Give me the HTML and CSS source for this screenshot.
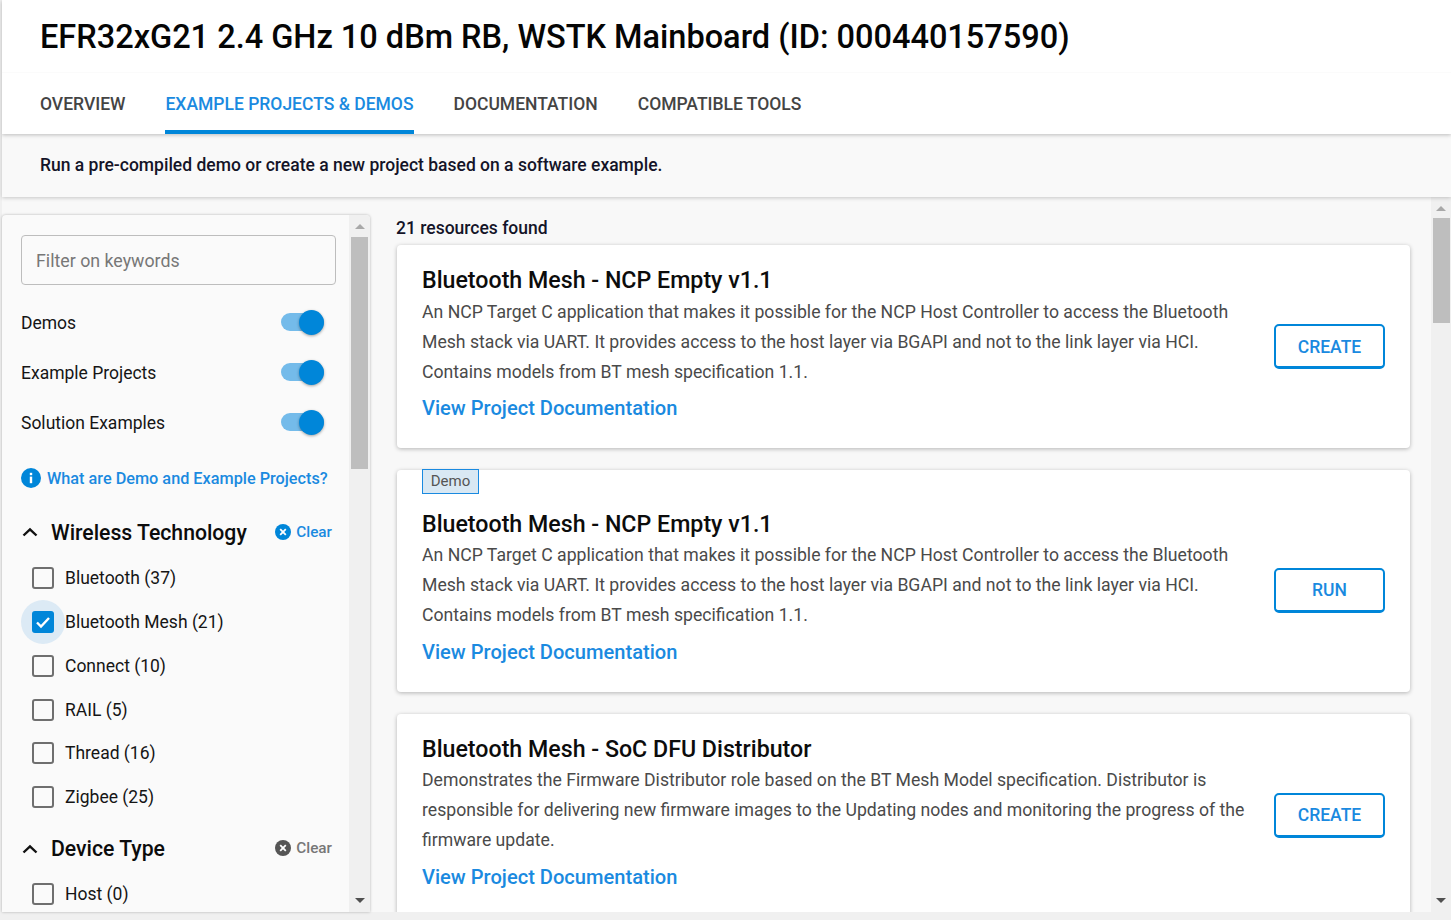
FILE: index.html
```html
<!DOCTYPE html>
<html lang="en">
<head>
<meta charset="utf-8">
<title>EFR32xG21 Example Projects</title>
<link rel="stylesheet" href="styles.css">
</head>
<body>
<div class="page">
  <header class="top">
    <h1 class="title">EFR32xG21 2.4 GHz 10 dBm RB, WSTK Mainboard (ID: 000440157590)</h1>
    <nav class="tabs">
      <a class="tab">OVERVIEW</a>
      <a class="tab active">EXAMPLE PROJECTS &amp; DEMOS</a>
      <a class="tab">DOCUMENTATION</a>
      <a class="tab">COMPATIBLE TOOLS</a>
    </nav>
  </header>
  <div class="intro">Run a pre-compiled demo or create a new project based on a software example.</div>
  <div class="main">
    <aside class="sidebar">
      <div class="side-body">
        <div class="search">Filter on keywords</div>
        <div class="toggle-row"><span class="toggle-label">Demos</span><span class="switch"><span class="knob"></span></span></div>
        <div class="toggle-row"><span class="toggle-label">Example Projects</span><span class="switch"><span class="knob"></span></span></div>
        <div class="toggle-row"><span class="toggle-label">Solution Examples</span><span class="switch"><span class="knob"></span></span></div>
        <a class="help">
          <svg class="help-icon" viewBox="0 0 20 20"><circle cx="10" cy="10" r="10" fill="#0086d9"/><rect x="8.8" y="8.6" width="2.4" height="6.6" fill="#fff"/><rect x="8.8" y="4.8" width="2.4" height="2.4" fill="#fff"/></svg>
          What are Demo and Example Projects?
        </a>
        <div class="group-head first">
          <svg class="chev" viewBox="0 0 16 10"><path d="M1.5 8.5 8 2.3l6.5 6.2" fill="none" stroke="#111" stroke-width="2.4"/></svg>
          <span class="group-title">Wireless Technology</span>
          <span class="clear on"><svg class="clear-icon" viewBox="0 0 16 16"><circle cx="8" cy="8" r="8" fill="#0086d9"/><path d="M5.2 5.2l5.6 5.6M10.8 5.2l-5.6 5.6" stroke="#fff" stroke-width="1.8"/></svg>Clear</span>
        </div>
        <label class="check"><span class="box"></span>Bluetooth (37)</label>
        <label class="check"><span class="box checked"><svg viewBox="0 0 22 22"><path d="M5 11.5l4 4 8-8.5" fill="none" stroke="#fff" stroke-width="2.4"/></svg></span>Bluetooth Mesh (21)</label>
        <label class="check"><span class="box"></span>Connect (10)</label>
        <label class="check"><span class="box"></span>RAIL (5)</label>
        <label class="check"><span class="box"></span>Thread (16)</label>
        <label class="check"><span class="box"></span>Zigbee (25)</label>
        <div class="group-head second">
          <svg class="chev" viewBox="0 0 16 10"><path d="M1.5 8.5 8 2.3l6.5 6.2" fill="none" stroke="#111" stroke-width="2.4"/></svg>
          <span class="group-title">Device Type</span>
          <span class="clear"><svg class="clear-icon" viewBox="0 0 16 16"><circle cx="8" cy="8" r="8" fill="#555"/><path d="M5.2 5.2l5.6 5.6M10.8 5.2l-5.6 5.6" stroke="#fff" stroke-width="1.8"/></svg>Clear</span>
        </div>
        <label class="check host"><span class="box"></span>Host (0)</label>
      </div>
      <div class="scrollbar side-scroll">
        <span class="arrow up"></span>
        <span class="thumb"></span>
        <span class="arrow down"></span>
      </div>
    </aside>
    <section class="results">
      <div class="count">21 resources found</div>
      <article class="card">
        <div class="card-text">
          <h2 class="card-title">Bluetooth Mesh - NCP Empty v1.1</h2>
          <p class="card-desc">An NCP Target C application that makes it possible for the NCP Host Controller to access the Bluetooth Mesh stack via UART. It provides access to the host layer via BGAPI and not to the link layer via HCI. Contains models from BT mesh specification 1.1.</p>
          <a class="doc">View Project Documentation</a>
        </div>
        <button class="action">CREATE</button>
      </article>
      <article class="card demo">
        <span class="tag">Demo</span>
        <div class="card-text">
          <h2 class="card-title">Bluetooth Mesh - NCP Empty v1.1</h2>
          <p class="card-desc">An NCP Target C application that makes it possible for the NCP Host Controller to access the Bluetooth Mesh stack via UART. It provides access to the host layer via BGAPI and not to the link layer via HCI. Contains models from BT mesh specification 1.1.</p>
          <a class="doc">View Project Documentation</a>
        </div>
        <button class="action">RUN</button>
      </article>
      <article class="card">
        <div class="card-text">
          <h2 class="card-title">Bluetooth Mesh - SoC DFU Distributor</h2>
          <p class="card-desc">Demonstrates the Firmware Distributor role based on the BT Mesh Model specification. Distributor is responsible for delivering new firmware images to the Updating nodes and monitoring the progress of the firmware update.</p>
          <a class="doc">View Project Documentation</a>
        </div>
        <button class="action">CREATE</button>
      </article>
    </section>
    <div class="scrollbar main-scroll">
      <span class="arrow up"></span>
      <span class="thumb"></span>
      <span class="arrow down dark"></span>
    </div>
  </div>
</div>
</body>
</html>
```

FILE: styles.css
```css
* { box-sizing: border-box; }
html, body { margin: 0; height: 100%; overflow: hidden; }
body { background: #f0f0f0; font-family: Roboto, "Liberation Sans", sans-serif; color: #111; }
.page { margin-left: 2px; height: 912px; display: flex; flex-direction: column; background: #f8f8f8; }

.top { background: #fff; box-shadow: 0 1px 4px rgba(0,0,0,.25); position: relative; z-index: 3; flex: none; }
.title { margin: 0; height: 73px; padding-left: 38px; font-size: 32.5px; line-height: 74px; font-weight: 500; color: #050505; border-bottom: 1px solid #fbfbfb; white-space: nowrap; }
.tabs { display: flex; gap: 40px; padding-left: 38px; height: 61px; }
.tab { font-size: 17.5px; font-weight: 500; line-height: 62px; color: #444; border-bottom: 3px solid transparent; height: 61px; }
.tab.active { color: #1a8ae0; border-bottom: 4px solid #0086d9; }

.intro { flex: none; height: 63px; padding-left: 38px; background: #f9f9f9; font-size: 17.5px; font-weight: 500; line-height: 62px; color: #141428; box-shadow: 0 1px 4px rgba(0,0,0,.2); position: relative; z-index: 2; }

.main { flex: 1; min-height: 0; display: flex; }

.sidebar { flex: none; width: 368px; margin-top: 18px; display: flex; background: #fafafa; border-radius: 4px 4px 0 0; box-shadow: 0 0 3px rgba(0,0,0,.28); overflow: hidden; }
.side-body { flex: none; width: 347px; padding: 20px 0 0 19px; overflow: hidden; isolation: isolate; }
.search { width: 315px; height: 50px; margin-bottom: 12px; border: 1px solid #bdbdbd; border-radius: 4px; padding-left: 14px; font-size: 17.8px; line-height: 49px; color: #777; }
.toggle-row { display: flex; justify-content: space-between; align-items: center; height: 50px; font-size: 17.5px; width: 303px; color: #151515; }
.toggle-label { padding-top: 2px; }
.switch { position: relative; width: 43px; height: 18px; border-radius: 9px; background: #74bbea; }
.knob { position: absolute; right: 0; top: -3.5px; width: 25px; height: 25px; border-radius: 50%; background: #0086d9; box-shadow: 0 1px 3px rgba(0,0,0,.35); }
.help { display: flex; align-items: center; gap: 6px; margin-top: 19px; height: 24px; font-size: 16.25px; font-weight: 500; color: #1a8ae0; white-space: nowrap; }
.help-icon { width: 20px; height: 20px; flex: none; }
.group-head { display: flex; align-items: center; height: 32px; width: 311px; }
.group-head.first { margin-top: 26px; }
.group-head.second { margin-top: 13.7px; }
.second .clear { margin-top: -2px; }
.chev { width: 16px; height: 10px; flex: none; margin-left: 1px; }
.group-title { margin-left: 13px; font-size: 21.2px; font-weight: 500; color: #0c0c0c; flex: 1; white-space: nowrap; }
.clear { display: flex; align-items: center; gap: 5px; font-size: 15.3px; font-weight: 500; color: #777; }
.clear.on { color: #1a8ae0; }
.clear-icon { width: 16px; height: 16px; }

.check { display: flex; align-items: center; height: 43.8px; font-size: 17.5px; color: #151515; white-space: nowrap; }
.group-head + .check { margin-top: 8.3px; }
.group-head + .check.host { margin-top: 7px; }
.box { flex: none; width: 22px; height: 22px; margin: 0 11px; border: 2px solid #6f6f6f; border-radius: 3px; position: relative; }
.box.checked { background: #0086d9; border: 0; }
.box.checked::before { content: ""; position: absolute; left: -11px; top: -11px; width: 44px; height: 44px; border-radius: 50%; background: #dceaf5; z-index: -1; }
.box svg { display: block; width: 22px; height: 22px; }

.scrollbar { flex: none; display: flex; flex-direction: column; align-items: center; background: #f0f0f0; position: relative; }
.side-scroll { width: 21px; padding-top: 22px; }
.side-scroll .thumb { width: 17px; height: 232px; }
.main-scroll { width: 20px; margin-left: auto; padding-top: 21px; }
.main-scroll .thumb { width: 17px; height: 105px; }
.thumb { background: #bebebe; display: block; }
.arrow { position: absolute; left: 50%; margin-left: -5px; width: 0; height: 0; border-left: 5px solid transparent; border-right: 5px solid transparent; }
.arrow.up { top: 9px; border-bottom: 5px solid #a8a8a8; }
.arrow.down { bottom: 9px; border-top: 5px solid #505050; }

.results { flex: none; width: 1060px; padding: 20px 20px 0 27px; overflow: hidden; }
.count { margin-left: -1px; font-size: 17.5px; font-weight: 500; line-height: 22px; height: 28px; color: #141428; white-space: nowrap; }
.card { position: relative; display: flex; align-items: center; background: #fff; border-radius: 4px; box-shadow: 0 1px 4px rgba(0,0,0,.28); height: 203px; margin-bottom: 22px; padding: 22px 25px 0 25px; }
.card.demo { height: 222px; padding-top: 41px; }
.card:last-child { height: 260px; margin-bottom: 0; padding-bottom: 57px; }
.card-text { flex: 1; min-width: 0; align-self: flex-start; }
.card-title { margin: 0; font-size: 23.2px; font-weight: 500; line-height: 26px; color: #0c0c0c; white-space: nowrap; }
.card-desc { margin: 3px 0 0; width: 830px; font-size: 17.65px; line-height: 30px; color: #4a4a4a; }
.doc { display: block; margin-top: 8px; font-size: 20.1px; font-weight: 500; line-height: 28px; color: #1a8ae0; }
.action { flex: none; width: 111px; height: 45px; margin-bottom: 23px; background: #fff; border: 2px solid #0086d9; border-bottom-width: 3px; border-radius: 5px; font-family: Roboto, "Liberation Sans", sans-serif; font-size: 17.5px; font-weight: 500; color: #1a8ae0; padding: 1px 0 0; }
.count + .card .card-desc { margin-top: 4px; }
.count + .card .doc { margin-top: 7px; }
.count + .card .action { padding-top: 3px; }
.tag { position: absolute; left: 25px; top: -1px; width: 57px; height: 25px; border: 1px solid #1a8ae0; background: #d9e8f3; font-size: 15px; line-height: 22px; text-align: center; color: #555; }
```
